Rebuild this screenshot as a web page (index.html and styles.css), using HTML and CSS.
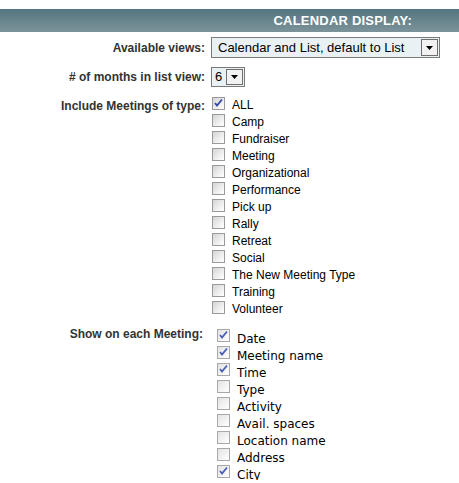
FILE: index.html
```html
<!DOCTYPE html>
<html>
<head>
<meta charset="utf-8">
<title>Calendar display</title>
<link rel="stylesheet" href="styles.css">
</head>
<body>
<div class="bar"><h2 class="bar-title">CALENDAR DISPLAY:</h2></div>

<div class="row row-views">
  <div class="lbl">Available views:</div>
  <div class="select select-wide">
    <span class="select-value">Calendar and List, default to List</span>
    <span class="select-btn"><svg width="7" height="4" viewBox="0 0 7 4"><path d="M0 0h7L3.5 4z" fill="#000"/></svg></span>
  </div>
</div>

<div class="row row-months">
  <div class="lbl">#&nbsp;of months in list view:</div>
  <div class="select select-small">
    <span class="select-value">6</span>
    <span class="select-btn"><svg width="7" height="4" viewBox="0 0 7 4"><path d="M0 0h7L3.5 4z" fill="#000"/></svg></span>
  </div>
</div>

<div class="row row-types">
  <div class="lbl lbl-list">Include Meetings of type:</div>
  <ul class="checks">
    <li class="check"><span class="box on"><svg width="11" height="11" viewBox="0 0 11 11"><path d="M2 5l2 2.5L9 1.5" fill="none" stroke="#3347a8" stroke-width="1.8"/></svg></span><span class="check-text">ALL</span></li>
    <li class="check"><span class="box"></span><span class="check-text">Camp</span></li>
    <li class="check"><span class="box"></span><span class="check-text">Fundraiser</span></li>
    <li class="check"><span class="box"></span><span class="check-text">Meeting</span></li>
    <li class="check"><span class="box"></span><span class="check-text">Organizational</span></li>
    <li class="check"><span class="box"></span><span class="check-text">Performance</span></li>
    <li class="check"><span class="box"></span><span class="check-text">Pick up</span></li>
    <li class="check"><span class="box"></span><span class="check-text">Rally</span></li>
    <li class="check"><span class="box"></span><span class="check-text">Retreat</span></li>
    <li class="check"><span class="box"></span><span class="check-text">Social</span></li>
    <li class="check"><span class="box"></span><span class="check-text">The New Meeting Type</span></li>
    <li class="check"><span class="box"></span><span class="check-text">Training</span></li>
    <li class="check"><span class="box"></span><span class="check-text">Volunteer</span></li>
  </ul>
</div>

<div class="row row-show">
  <div class="lbl lbl-list lbl-show">Show on each Meeting:</div>
  <ul class="checks checks-show">
    <li class="check"><span class="box on"><svg width="11" height="11" viewBox="0 0 11 11"><path d="M2 5l2 2.5L9 1.5" fill="none" stroke="#4a5fb4" stroke-width="1.8"/></svg></span><span class="check-text">Date</span></li>
    <li class="check"><span class="box on"><svg width="11" height="11" viewBox="0 0 11 11"><path d="M2 5l2 2.5L9 1.5" fill="none" stroke="#4a5fb4" stroke-width="1.8"/></svg></span><span class="check-text">Meeting name</span></li>
    <li class="check"><span class="box on"><svg width="11" height="11" viewBox="0 0 11 11"><path d="M2 5l2 2.5L9 1.5" fill="none" stroke="#4a5fb4" stroke-width="1.8"/></svg></span><span class="check-text">Time</span></li>
    <li class="check"><span class="box"></span><span class="check-text">Type</span></li>
    <li class="check"><span class="box"></span><span class="check-text">Activity</span></li>
    <li class="check"><span class="box"></span><span class="check-text">Avail. spaces</span></li>
    <li class="check"><span class="box"></span><span class="check-text">Location name</span></li>
    <li class="check"><span class="box"></span><span class="check-text">Address</span></li>
    <li class="check"><span class="box on"><svg width="11" height="11" viewBox="0 0 11 11"><path d="M2 5l2 2.5L9 1.5" fill="none" stroke="#4a5fb4" stroke-width="1.8"/></svg></span><span class="check-text">City</span></li>
  </ul>
</div>
</body>
</html>
```

FILE: styles.css
```css
html, body {
  margin: 0;
  padding: 0;
  background: #fff;
}

body {
  font-family: "Liberation Sans", Arial, sans-serif;
  font-size: 12px;
  color: #000;
  overflow: hidden;
}

/* section header strip */
.bar {
  margin-top: 9px;
  height: 23px;
  background: linear-gradient(#547580, #7c939a);
  display: flex;
  justify-content: flex-end;
  align-items: center;
  padding-right: 47px;
}

.bar-title {
  margin: 0;
  font-size: 13px;
  font-weight: bold;
  color: #fff;
  letter-spacing: 0.2px;
}

/* label / control rows */
.row {
  display: flex;
  gap: 6px;
}

.lbl {
  width: 205px;
  flex: none;
  text-align: right;
  font-weight: bold;
  color: #333;
  white-space: nowrap;
}

.row-views {
  margin-top: 5px;
  align-items: center;
}

.row-months {
  margin-top: 9px;
  align-items: center;
}

.row-types {
  margin-top: 8px;
}

.row-show {
  margin-top: 11px;
}

.lbl-list {
  line-height: 15px;
  padding-top: 4px;
}

.lbl-show {
  width: 203px;
  padding-top: 0;
}

/* drop-down boxes */
.select {
  display: flex;
  align-items: stretch;
  border: 1px solid #7a7a7a;
  background: #e9f1f4;
  box-sizing: border-box;
}

.select-wide {
  width: 229px;
  height: 21px;
}

.select-small {
  width: 34px;
  height: 20px;
}

.select-value {
  flex: 1;
  padding-left: 6px;
  font-size: 13px;
  line-height: 19px;
  color: #000;
}

.select-small .select-value {
  padding-left: 3px;
  line-height: 18px;
}

.select-btn {
  width: 15px;
  margin: 1px;
  border: 1px solid #6f6f6f;
  background: #f2f2f2;
  display: flex;
  align-items: center;
  justify-content: center;
}

/* checkbox lists */
.checks {
  list-style: none;
  margin: 0;
  padding: 0;
  margin-left: 1px;
}

.check {
  height: 17px;
  display: flex;
  align-items: flex-start;
}

.box {
  width: 13px;
  height: 13px;
  margin-top: 2px;
  box-sizing: border-box;
  border: 1px solid #9a9a9a;
  background: linear-gradient(135deg, #d4d4d4, #f4f4f4 70%, #fff);
  display: flex;
  align-items: center;
  justify-content: center;
  flex: none;
}

.check-text {
  margin-left: 7px;
  line-height: 15px;
  padding-top: 3px;
  white-space: nowrap;
}

.checks-show {
  margin-left: 8px;
}

.checks-show .box {
  background: linear-gradient(135deg, #e2e2e2, #f7f7f7 70%, #fff);
  border-color: #a8a8a8;
}

.checks-show .check-text {
  font-family: "DejaVu Sans", Verdana, sans-serif;
  margin-left: 7px;
  padding-top: 5px;
}
```
